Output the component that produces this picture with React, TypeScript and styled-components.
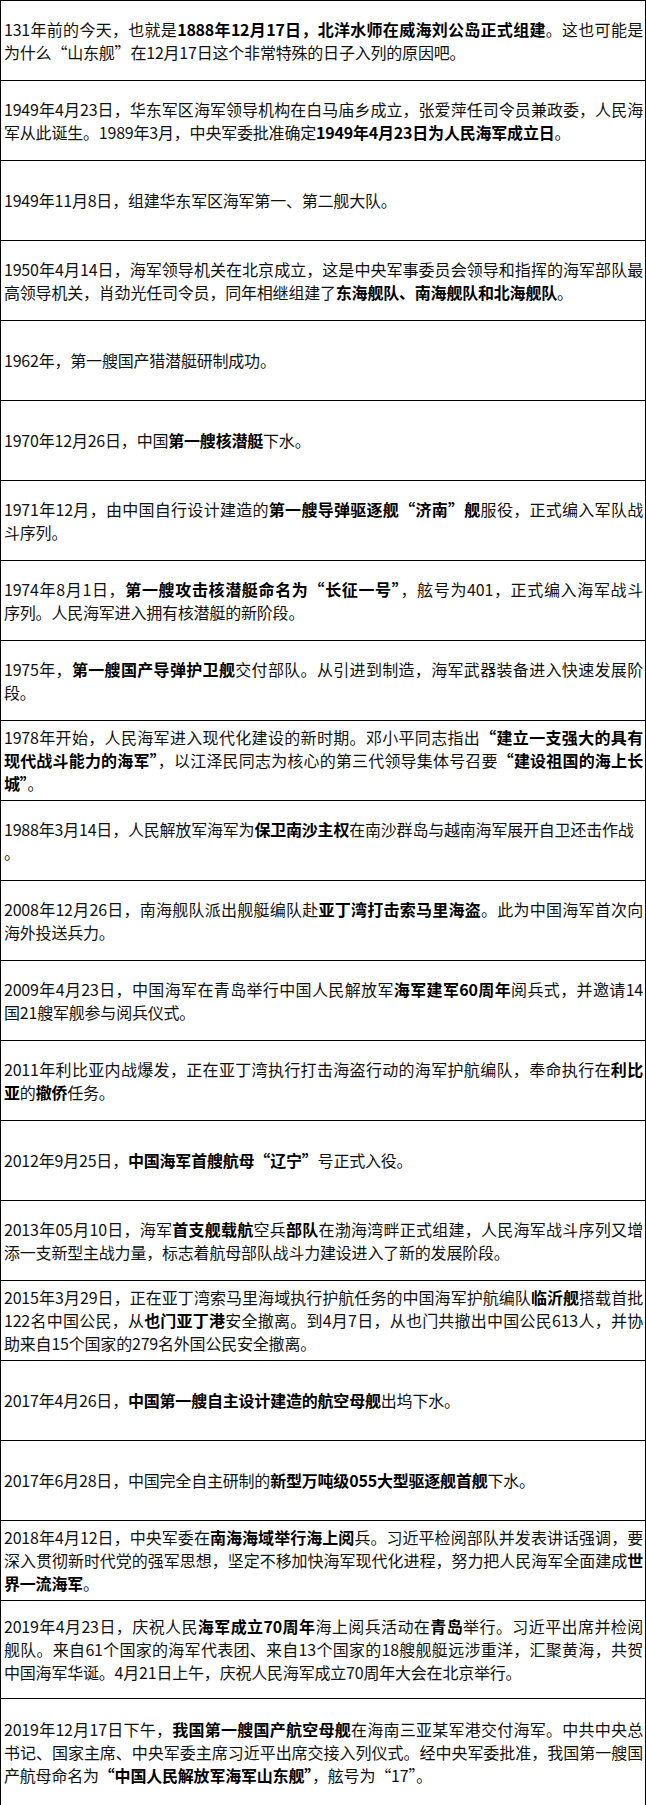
import styled, { createGlobalStyle } from 'styled-components';

type Entry = {
  height?: number;
  lines: string[];
};

/**
 * Text of each cell, one string per printed line; **…** marks bold runs.
 */
const entries: Entry[] = [
  {
    lines: [
      '131年前的今天，也就是**1888年12月17日，北洋水师在威海刘公岛正式组建**。这也可能是',
      '为什么“山东舰”在12月17日这个非常特殊的日子入列的原因吧。',
    ],
  },
  {
    lines: [
      '1949年4月23日，华东军区海军领导机构在白马庙乡成立，张爱萍任司令员兼政委，人民海',
      '军从此诞生。1989年3月，中央军委批准确定**1949年4月23日为人民海军成立日**。',
    ],
  },
  { lines: ['1949年11月8日，组建华东军区海军第一、第二舰大队。'] },
  {
    lines: [
      '1950年4月14日，海军领导机关在北京成立，这是中央军事委员会领导和指挥的海军部队最',
      '高领导机关，肖劲光任司令员，同年相继组建了**东海舰队、南海舰队和北海舰队**。',
    ],
  },
  { lines: ['1962年，第一艘国产猎潜艇研制成功。'] },
  { lines: ['1970年12月26日，中国**第一艘核潜艇**下水。'] },
  {
    lines: [
      '1971年12月，由中国自行设计建造的**第一艘导弹驱逐舰“济南”舰**服役，正式编入军队战',
      '斗序列。',
    ],
  },
  {
    lines: [
      '1974年8月1日，**第一艘攻击核潜艇命名为“长征一号”**，舷号为401，正式编入海军战斗',
      '序列。人民海军进入拥有核潜艇的新阶段。',
    ],
  },
  {
    lines: [
      '1975年，**第一艘国产导弹护卫舰**交付部队。从引进到制造，海军武器装备进入快速发展阶',
      '段。',
    ],
  },
  {
    lines: [
      '1978年开始，人民海军进入现代化建设的新时期。邓小平同志指出**“建立一支强大的具有**',
      '**现代战斗能力的海军”**，以江泽民同志为核心的第三代领导集体号召要**“建设祖国的海上长**',
      '**城”**。',
    ],
  },
  {
    lines: [
      '1988年3月14日，人民解放军海军为**保卫南沙主权**在南沙群岛与越南海军展开自卫还击作战',
      '。',
    ],
  },
  {
    lines: [
      '2008年12月26日，南海舰队派出舰艇编队赴**亚丁湾打击索马里海盗**。此为中国海军首次向',
      '海外投送兵力。',
    ],
  },
  {
    lines: [
      '2009年4月23日，中国海军在青岛举行中国人民解放军**海军建军60周年**阅兵式，并邀请14',
      '国21艘军舰参与阅兵仪式。',
    ],
  },
  {
    lines: [
      '2011年利比亚内战爆发，正在亚丁湾执行打击海盗行动的海军护航编队，奉命执行在**利比**',
      '**亚**的**撤侨**任务。',
    ],
  },
  { lines: ['2012年9月25日，**中国海军首艘航母“辽宁”**号正式入役。'] },
  {
    lines: [
      '2013年05月10日，海军**首支舰载航**空兵**部队**在渤海湾畔正式组建，人民海军战斗序列又增',
      '添一支新型主战力量，标志着航母部队战斗力建设进入了新的发展阶段。',
    ],
  },
  {
    lines: [
      '2015年3月29日，正在亚丁湾索马里海域执行护航任务的中国海军护航编队**临沂舰**搭载首批',
      '122名中国公民，从**也门亚丁港**安全撤离。到4月7日，从也门共撤出中国公民613人，并协',
      '助来自15个国家的279名外国公民安全撤离。',
    ],
  },
  { lines: ['2017年4月26日，**中国第一艘自主设计建造的航空母舰**出坞下水。'] },
  { lines: ['2017年6月28日，中国完全自主研制的**新型万吨级055大型驱逐舰首舰**下水。'] },
  {
    lines: [
      '2018年4月12日，中央军委在**南海海域举行海上阅**兵。习近平检阅部队并发表讲话强调，要',
      '深入贯彻新时代党的强军思想，坚定不移加快海军现代化进程，努力把人民海军全面建成**世**',
      '**界一流海军**。',
    ],
  },
  {
    height: 98,
    lines: [
      '2019年4月23日，庆祝人民**海军成立70周年**海上阅兵活动在**青岛**举行。习近平出席并检阅',
      '舰队。来自61个国家的海军代表团、来自13个国家的18艘舰艇远涉重洋，汇聚黄海，共贺',
      '中国海军华诞。4月21日上午，庆祝人民海军成立70周年大会在北京举行。',
    ],
  },
  {
    height: 107,
    lines: [
      '2019年12月17日下午，**我国第一艘国产航空母舰**在海南三亚某军港交付海军。中共中央总',
      '书记、国家主席、中央军委主席习近平出席交接入列仪式。经中央军委批准，我国第一艘国',
      '产航母命名为**“中国人民解放军海军山东舰”**，舷号为“17”。',
    ],
  },
];

const GlobalStyle = createGlobalStyle`
  html, body {
    margin: 0;
    padding: 0;
    background: #fff;
  }
  body {
    font-family: 'Noto Sans CJK SC', 'Noto Sans', sans-serif;
    color: #111;
  }
`;

const Table = styled.div`
  width: 646px;
  box-sizing: border-box;
  border-left: 1px solid #000;
  border-right: 1px solid #000;
  border-bottom: 1px solid #000;
`;

const Cell = styled.div<{ $h: number }>`
  height: ${({ $h }) => $h}px;
  box-sizing: border-box;
  border-top: 1px solid #000;
  display: flex;
  flex-direction: column;
  justify-content: center;
  padding: 0 2px 0 3px;
`;

const Line = styled.div<{ $full: boolean }>`
  font-size: 16px;
  line-height: 23px;
  white-space: nowrap;
  letter-spacing: -0.2px;
  text-align: ${({ $full }) => ($full ? 'justify' : 'left')};
  text-align-last: ${({ $full }) => ($full ? 'justify' : 'left')};
  overflow: hidden;
`;

const Strong = styled.b`
  font-weight: 700;
  color: #000;
`;

function renderLine(text: string) {
  return text.split('**').map((part, i) => (i % 2 ? <Strong key={i}>{part}</Strong> : part));
}

export default function App(): JSX.Element {
  return (
    <>
      <GlobalStyle />
      <Table>
        {entries.map((entry, i) => (
          <Cell key={i} $h={entry.height ?? 80}>
            {entry.lines.map((line, j) => (
              <Line key={j} $full={j < entry.lines.length - 1 && entry.lines[j + 1] !== '。'}>
                {renderLine(line)}
              </Line>
            ))}
          </Cell>
        ))}
      </Table>
    </>
  );
}
